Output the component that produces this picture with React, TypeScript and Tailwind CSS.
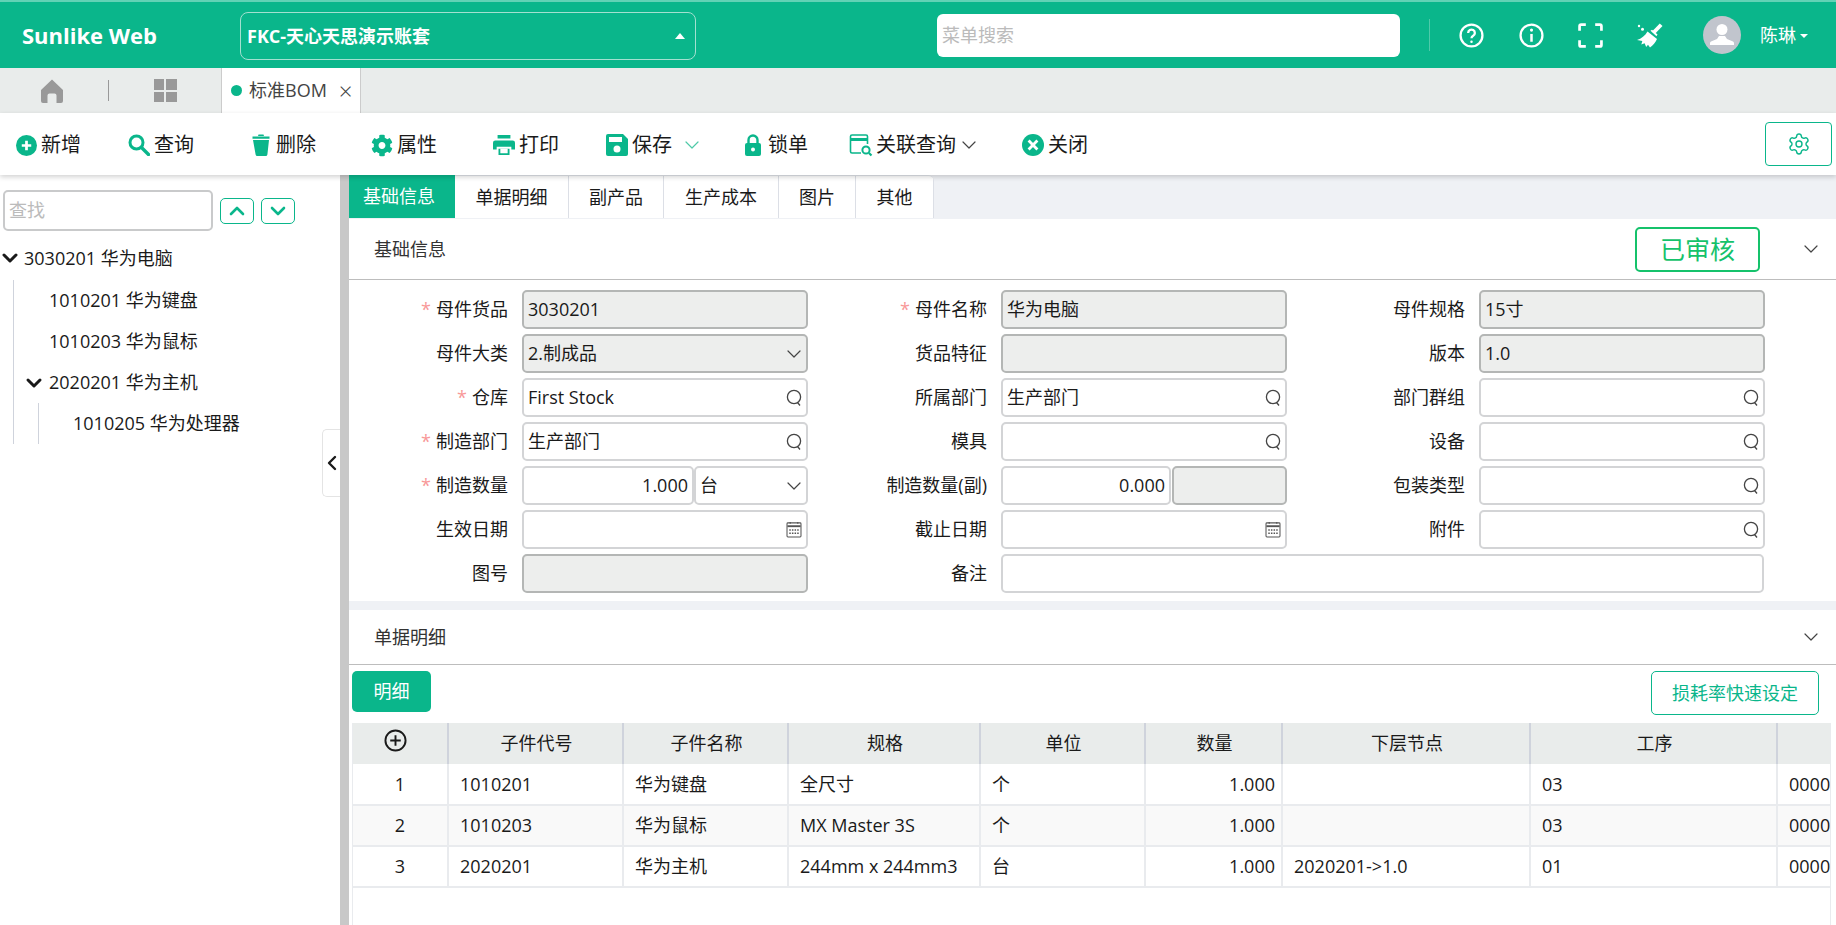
import type { ReactNode } from "react";
import { FaCog } from "react-icons/fa";
import { ChevronDown, ChevronUp, ChevronLeft, Settings } from "lucide-react";

const green = "#0ab68b";

const tabs = ["单据明细", "副产品", "生产成本", "图片", "其他"];
const tabWidths = ["w-[114px]", "w-[95px]", "w-[115px]", "w-[77px]", "w-[78px]"];

function PlusIcon() {
  return (
    <svg viewBox="0 0 20 20" className="h-[21px] w-[21px]">
      <circle cx="10" cy="10" r="10" fill={green} />
      <path d="M10 5.5v9M5.5 10h9" stroke="#fff" strokeWidth="2.6" />
    </svg>
  );
}

function SearchIcon() {
  return (
    <svg viewBox="0 0 22 22" className="h-[22px] w-[22px]" fill="none" stroke={green}>
      <circle cx="8.5" cy="8.5" r="6.5" strokeWidth="3" />
      <path d="M13.5 13.5l7 7" strokeWidth="3.4" strokeLinecap="round" />
    </svg>
  );
}

function TrashIcon() {
  return (
    <svg viewBox="0 0 18 22" className="h-[22px] w-[18px]" fill={green}>
      <path d="M6.5 0.5h5l0.5 1.5h-6zM0.5 2.5h17v2.2h-17zM1 6h16l-1.6 14.5q-0.2 1.5-1.7 1.5h-8.4q-1.5 0-1.7-1.5z" />
    </svg>
  );
}

function PrintIcon() {
  return (
    <svg viewBox="0 0 24 22" className="h-[22px] w-[24px]" fill={green}>
      <path d="M5 0h14v4H5zM2.5 6h19Q24 6 24 8.5V16h-4v-3H4v3H0V8.5Q0 6 2.5 6zM6 15h12v7H6z" />
      <rect x="8" y="15" width="8" height="5" fill="#fff" />
    </svg>
  );
}

function SaveIcon() {
  return (
    <svg viewBox="0 0 22 22" className="h-[22px] w-[22px]">
      <path d="M2 0h15l5 5v15q0 2-2 2H2q-2 0-2-2V2q0-2 2-2z" fill={green} />
      <rect x="3" y="3" width="13" height="5" fill="#fff" />
      <circle cx="11" cy="15" r="3.5" fill="#fff" />
    </svg>
  );
}

function LockIcon() {
  return (
    <svg viewBox="0 0 16 22" className="h-[22px] w-[16px]">
      <path d="M3.5 10V6a4.5 4.5 0 0 1 9 0v4" fill="none" stroke={green} strokeWidth="2.4" />
      <rect x="0" y="9" width="16" height="13" rx="2" fill={green} />
      <circle cx="8" cy="15.5" r="2" fill="#fff" />
    </svg>
  );
}

function LinkQueryIcon() {
  return (
    <svg viewBox="0 0 24 24" className="h-[24px] w-[24px] shrink-0" fill="none" stroke={green}>
      <path d="M12 20H3q-1.5 0-1.5-1.5v-15Q1.5 2 3 2h14q1.500 0 1.500 1.500V11" strokeWidth="1.6" />
      <path d="M2 6.500h16" strokeWidth="3" />
      <circle cx="17" cy="17" r="3.6" strokeWidth="2" />
      <path d="M20 20l2.500 2.500" strokeWidth="2.2" />
    </svg>
  );
}

function CloseIcon() {
  return (
    <svg viewBox="0 0 20 20" className="h-[22px] w-[22px]">
      <circle cx="10" cy="10" r="10" fill={green} />
      <path d="M6 6l8 8M14 6l-8 8" stroke="#fff" strokeWidth="2.6" />
    </svg>
  );
}

function LensIcon() {
  return (
    <svg viewBox="0 0 16 18" className="h-[18px] w-[16px]" fill="none" stroke="#444" strokeWidth="1.3">
      <circle cx="8" cy="8" r="6.6" />
      <path d="M11.500 13.500l2.500 3" />
    </svg>
  );
}

function CalendarIcon() {
  return (
    <svg viewBox="0 0 16 18" className="h-[17px] w-[16px]" fill="none" stroke="#555">
      <rect x="0.6" y="2" width="14.8" height="15" rx="1" strokeWidth="1.1" />
      <path d="M1 5.500h14" strokeWidth="2" />
      <path d="M4 1v2M12 1v2" strokeWidth="1.2" />
      <path d="M3 9.500h10M3 13h10" strokeWidth="1.4" strokeDasharray="1.6 1.2" />
    </svg>
  );
}

function ToolItem({
  icon,
  label,
  width,
  chevron,
  chevronGap,
}: {
  icon: ReactNode;
  label: string;
  width: string;
  chevron?: string;
  chevronGap?: string;
}) {
  return (
    <div className={`flex shrink-0 items-center ${width}`}>
      <div className="flex h-6 w-[22px] items-center justify-center">{icon}</div>
      <span className="ml-[4px] text-[20px] text-[#1a1a1a]">{label}</span>
      {chevron && <ChevronDown className={`h-[24px] w-[24px] ${chevronGap}`} strokeWidth={1.2} color={chevron} />}
    </div>
  );
}

type FieldProps = {
  label: string;
  required?: boolean;
  value?: string;
  kind?: "text" | "disabled" | "lookup" | "select" | "date";
};

function Box({ value, kind = "text", right, className = "" }: { value?: string; kind?: FieldProps["kind"]; right?: boolean; className?: string }) {
  const disabled = kind === "disabled" || kind === "select";
  return (
    <div
      className={`flex h-[39px] items-center rounded-[5px] border-2 px-[4px] text-[18px] text-[#1a1a1a] ${
        disabled ? "border-[#b4b6b5] bg-[#edeeed]" : "border-[#d3d4d6] bg-white"
      } ${right ? "justify-end" : "justify-between"} ${className}`}
    >
      {value !== undefined && <span className="truncate">{value}</span>}
      {kind === "lookup" && <span className="ml-auto flex"><LensIcon /></span>}
      {kind === "date" && <span className="ml-auto flex"><CalendarIcon /></span>}
      {kind === "select" && <ChevronDown className="-mr-[4px] ml-auto h-[24px] w-[24px]" strokeWidth={1.2} color="#444" />}
    </div>
  );
}

function FieldLabel({ label, required }: { label: string; required?: boolean }) {
  return (
    <div className="w-[159px] shrink-0 text-right text-[18px] text-[#1a1a1a]">
      {required && <span className="mr-[5px] text-[#f89898]">*</span>}
      {label}
    </div>
  );
}

function Field({ label, required, value, kind }: FieldProps) {
  return (
    <div className="flex items-center gap-[14px]">
      <FieldLabel label={label} required={required} />
      <Box value={value} kind={kind} className="w-[286px]" />
    </div>
  );
}

function SectionHeader({ title, height, children }: { title: string; height: string; children?: ReactNode }) {
  return (
    <div className={`flex items-center border-b border-[#bdbdbd] bg-white pl-[25px] pr-[13px] ${height}`}>
      <span className="text-[18px] text-[#333]">{title}</span>
      {children}
      <ChevronDown className={`h-[24px] w-[24px] ${children ? "ml-[39px]" : "ml-auto"}`} strokeWidth={1.2} color="#444" />
    </div>
  );
}

const tableRows = [
  { no: "1", code: "1010201", name: "华为键盘", spec: "全尺寸", unit: "个", qty: "1.000", node: "", proc: "03" },
  { no: "2", code: "1010203", name: "华为鼠标", spec: "MX Master 3S", unit: "个", qty: "1.000", node: "", proc: "03" },
  { no: "3", code: "2020201", name: "华为主机", spec: "244mm x 244mm3", unit: "台", qty: "1.000", node: "2020201->1.0", proc: "01" },
];

const th = "h-[41px] border-r-2 border-[#cfd3dc] pl-[2px] text-center font-normal";
const td = "h-[41px] border-r-2 border-b-2 border-[#e9ebee] px-[11px]";

export default function App() {
  return (
    <div
      className="flex h-[925px] w-[1836px] flex-col overflow-hidden bg-white text-[18px]"
      style={{ fontFamily: '"Open Sans", "Noto Sans CJK SC", sans-serif' }}
    >
      {/* top bar */}
      <header className="flex h-[68px] shrink-0 items-center border-t-2 border-[#62d2b5] bg-[#0ab68b] text-white">
        <div className="w-[240px] shrink-0 pl-[22px] text-[22px] font-bold">Sunlike Web</div>
        <div className="mt-[2px] flex h-[48px] w-[456px] shrink-0 items-center justify-between rounded-[8px] border border-[#a3e0d0] pl-[6px] pr-[10px] text-[18px] font-bold">
          <span>FKC-天心天思演示账套</span>
          <span className="h-0 w-0 border-x-[5px] border-b-[6px] border-x-transparent border-b-white" />
        </div>
        <div className="ml-[241px] flex h-[43px] w-[463px] shrink-0 items-center rounded-[6px] bg-white pl-[5px] text-[#bbb]">菜单搜索</div>
        <div className="ml-[29px] h-[32px] w-px bg-[#4fcaaa]" />
        <svg viewBox="0 0 24 24" className="ml-[29px] h-[25px] w-[25px]" fill="none" stroke="#fff" strokeWidth="2.200">
          <circle cx="12" cy="12" r="10.500" />
          <path d="M8.800 9.500a3.200 3.200 0 1 1 4.800 2.800c-1 .6-1.600 1.200-1.600 2.400" />
          <circle cx="12" cy="18" r="1.200" fill="#fff" stroke="none" />
        </svg>
        <svg viewBox="0 0 24 24" className="ml-[35px] h-[25px] w-[25px]" fill="none" stroke="#fff" strokeWidth="2.200">
          <circle cx="12" cy="12" r="10.500" />
          <path d="M12 10.500v7.500" strokeWidth="2.400" />
          <circle cx="12" cy="6.800" r="1.500" fill="#fff" stroke="none" />
        </svg>
        <svg viewBox="0 0 24 24" className="ml-[34px] h-[25px] w-[25px]" fill="none" stroke="#fff" strokeWidth="2.600">
          <path d="M1.500 7.500V3q0-1.500 1.500-1.500h4.500M16.500 1.500H21q1.500 0 1.500 1.500v4.500M22.500 16.500V21q0 1.500-1.500 1.500h-4.500M7.500 22.500H3q-1.500 0-1.500-1.500v-4.500" />
        </svg>
        <svg viewBox="0 0 26 26" className="ml-[34px] h-[26px] w-[26px]" fill="#fff">
          <path d="M22.800 1.500l2.700 2.500-7.700 8-2.800-2.500z" />
          <path d="M10.500 9.500l9.500 7.500c-1.500 3.500-4 6.500-7 8.500l-2-2.800-1.800 2.200-1.600-3.600-3.300 1.200 1-3.600-5.300-.9c4.500-1.500 8-4.300 10.500-8.500z" />
          <path d="M13.500 8.700l1.500-1 5.500 4.800-1 1.800z" />
          <circle cx="2" cy="4" r="1.200" />
          <circle cx="5.500" cy="7.200" r="1.500" />
        </svg>
        <div className="ml-[40px] flex h-[38px] w-[38px] shrink-0 items-center justify-center overflow-hidden rounded-full bg-[#c1c5cd]">
          <svg viewBox="0 0 38 38" className="h-[38px] w-[38px]" fill="#fff">
            <circle cx="19" cy="13.500" r="5.500" />
            <path d="M16 20h6l2 3 6 2.500q1 .5 1 1.500v2H7v-2q0-1 1-1.500l6-2.500z" />
          </svg>
        </div>
        <span className="ml-[19px] text-[18px]">陈琳</span>
        <span className="ml-[4px] mt-[2px] h-0 w-0 border-x-[4px] border-t-[4px] border-x-transparent border-t-white" />
      </header>

      {/* tab bar */}
      <div className="flex h-[45px] shrink-0 items-stretch bg-[#e9eceb]">
        <div className="flex w-[108px] shrink-0 items-center justify-center pr-[4px]">
          <svg viewBox="0 0 22 24" className="h-[24px] w-[22px]" fill="#999">
            <path d="M11 0.500L22 11v11q0 2-2 2h-4.500v-7.500q0-2-2-2h-5q-2 0-2 2V24H2q-2 0-2-2V11z" />
          </svg>
        </div>
        <div className="my-[12px] w-px bg-[#999]" />
        <div className="flex w-[112px] shrink-0 items-center justify-center">
          <div className="grid grid-cols-2 gap-[2px]">
            <span className="h-[10.500px] w-[10.500px] bg-[#999]" />
            <span className="h-[10.500px] w-[10.500px] bg-[#999]" />
            <span className="h-[10.500px] w-[10.500px] bg-[#999]" />
            <span className="h-[10.500px] w-[10.500px] bg-[#999]" />
          </div>
        </div>
        <div className="flex w-[140px] shrink-0 items-center border-x border-[#ccc] bg-white pl-[9px] text-[18px] text-[#444]">
          <span className="mr-[7px] h-[11px] w-[11px] rounded-full bg-[#0ab68b]" />
          标准BOM
          <span className="ml-[12px] text-[24px] font-light leading-none">×</span>
        </div>
      </div>

      {/* toolbar */}
      <div className="relative z-10 flex h-[62px] shrink-0 items-center pl-[15px] pr-[4px] pt-[2px] shadow-[0_2px_5px_rgba(0,0,0,0.18)]">
        <ToolItem icon={<PlusIcon />} label="新增" width="w-[113px]" />
        <ToolItem icon={<SearchIcon />} label="查询" width="w-[122px]" />
        <ToolItem icon={<TrashIcon />} label="删除" width="w-[121px]" />
        <ToolItem icon={<FaCog size={23} color={green} />} label="属性" width="w-[122px]" />
        <ToolItem icon={<PrintIcon />} label="打印" width="w-[113px]" />
        <ToolItem icon={<SaveIcon />} label="保存" width="w-[136px]" chevron="#4fc9a8" chevronGap="ml-[8px]" />
        <ToolItem icon={<LockIcon />} label="锁单" width="w-[108px]" />
        <ToolItem icon={<LinkQueryIcon />} label="关联查询" width="w-[172px]" chevron="#444" chevronGap="ml-[1px]" />
        <ToolItem icon={<CloseIcon />} label="关闭" width="w-[100px]" />
        <button className="-mt-[2px] ml-auto flex h-[44px] w-[67px] items-center justify-center rounded-[4px] border border-[#0ab68b]">
          <Settings className="h-[24px] w-[24px]" strokeWidth={1.4} color={green} />
        </button>
      </div>

      <div className="flex min-h-0 flex-1">
        {/* tree */}
        <aside className="relative w-[340px] shrink-0 pt-[15px] text-[18px] text-[#1a1a1a]">
          <div className="flex items-center pl-[3px]">
            <div className="flex h-[41px] w-[210px] items-center rounded-[5px] border-2 border-[#c9cacb] pl-[4px] text-[#bbb]">查找</div>
            <button className="ml-[7px] flex h-[26px] w-[34px] items-center justify-center rounded-[5px] border border-[#0ab68b]">
              <ChevronUp className="h-[24px] w-[24px]" strokeWidth={2.6} color={green} />
            </button>
            <button className="ml-[7px] flex h-[26px] w-[34px] items-center justify-center rounded-[5px] border border-[#0ab68b]">
              <ChevronDown className="h-[24px] w-[24px]" strokeWidth={2.6} color={green} />
            </button>
          </div>
          <div className="mt-[6px]">
            <div className="flex h-[42px] items-center">
              <ChevronDown className="-ml-[2px] h-[24px] w-[24px]" strokeWidth={3} color="#1a1a1a" />
              <span className="ml-[2px]">3030201 华为电脑</span>
            </div>
            <div className="ml-[13px] mt-[1px] border-l border-[#cfd3dc]">
              <div className="flex h-[41px] items-center pl-[35px]">1010201 华为键盘</div>
              <div className="flex h-[41px] items-center pl-[35px]">1010203 华为鼠标</div>
              <div className="flex h-[41px] items-center pl-[8px]">
                <ChevronDown className="h-[24px] w-[24px]" strokeWidth={3} color="#1a1a1a" />
                <span className="ml-[3px]">2020201 华为主机</span>
              </div>
              <div className="ml-[24px] border-l border-[#cfd3dc]">
                <div className="flex h-[41px] items-center pl-[34px]">1010205 华为处理器</div>
              </div>
            </div>
          </div>
          <div className="absolute right-0 top-[254px] flex h-[68px] w-[18px] items-center justify-center rounded-l-[5px] border border-r-0 border-[#e4e4e4] bg-white">
            <ChevronLeft className="h-[24px] w-[24px] shrink-0" strokeWidth={2.4} color="#1a1a1a" />
          </div>
        </aside>
        <div className="w-[9px] shrink-0 bg-[#c8c8c8]" />

        {/* detail */}
        <main className="flex min-w-0 flex-1 flex-col bg-white text-[18px] text-[#1a1a1a]">
          <div className="flex h-[44px] shrink-0 bg-[#eff1f5]">
            <div className="flex h-[43px] w-[106px] items-center justify-center bg-[#0ab68b] pr-[6px] text-white">基础信息</div>
            <div className="flex h-[43px] overflow-hidden rounded-tr-[6px] border-t border-[#e4e7ed]">
              {tabs.map((t, i) => (
                <div key={t} className={`flex items-center justify-center border-r border-[#dcdfe6] bg-white ${tabWidths[i]}`}>
                  {t}
                </div>
              ))}
            </div>
          </div>

          <SectionHeader title="基础信息" height="h-[61px]">
            <div className="ml-auto mt-[1px] flex h-[45px] w-[125px] items-center justify-center rounded-[5px] border-2 border-[#15c26b] text-[25px] text-[#15c26b]">已审核</div>
          </SectionHeader>

          <div className="grid grid-cols-[479px_478px_479px] gap-y-[5px] pb-[8px] pt-[10px]">
            <Field label="母件货品" required value="3030201" kind="disabled" />
            <Field label="母件名称" required value="华为电脑" kind="disabled" />
            <Field label="母件规格" value="15寸" kind="disabled" />
            <Field label="母件大类" value="2.制成品" kind="select" />
            <Field label="货品特征" kind="disabled" />
            <Field label="版本" value="1.0" kind="disabled" />
            <Field label="仓库" required value="First Stock" kind="lookup" />
            <Field label="所属部门" value="生产部门" kind="lookup" />
            <Field label="部门群组" kind="lookup" />
            <Field label="制造部门" required value="生产部门" kind="lookup" />
            <Field label="模具" kind="lookup" />
            <Field label="设备" kind="lookup" />
            <div className="flex items-center gap-[14px]">
              <FieldLabel label="制造数量" required />
              <Box value="1.000" right className="w-[172px]" />
              <div className="-ml-[14px] flex h-[39px] w-[114px] items-center justify-between rounded-[5px] border-2 border-[#d3d4d6] pl-[4px]">
                台
                <ChevronDown className="h-[24px] w-[24px]" strokeWidth={1.2} color="#444" />
              </div>
            </div>
            <div className="flex items-center gap-[14px]">
              <FieldLabel label="制造数量(副)" />
              <Box value="0.000" right className="w-[170px]" />
              <Box kind="disabled" className="-ml-[13px] w-[115px]" />
            </div>
            <Field label="包装类型" kind="lookup" />
            <Field label="生效日期" kind="date" />
            <Field label="截止日期" kind="date" />
            <Field label="附件" kind="lookup" />
            <Field label="图号" kind="disabled" />
            <div className="col-span-2 flex items-center gap-[14px] pr-[21px]">
              <FieldLabel label="备注" />
              <Box className="flex-1" />
            </div>
          </div>

          <div className="h-[9px] shrink-0 bg-[#eff1f5]" />
          <SectionHeader title="单据明细" height="h-[55px]" />

          <div className="flex h-[58px] shrink-0 items-start justify-between pl-[3px] pr-[17px] pt-[6px]">
            <div className="flex h-[41px] w-[79px] items-center justify-center rounded-[5px] bg-[#0ab68b] text-white">明细</div>
            <div className="flex h-[44px] w-[168px] items-center justify-center rounded-[5px] border border-[#0ab68b] text-[#0ab68b]">损耗率快速设定</div>
          </div>

          <div className="ml-[3px] mr-[5px] min-h-0 flex-1 overflow-hidden border-x border-[#e9ebee]">
            <table className="w-full table-fixed border-collapse whitespace-nowrap">
              <colgroup>
                <col className="w-[95px]" />
                <col className="w-[175px]" />
                <col className="w-[165px]" />
                <col className="w-[192px]" />
                <col className="w-[165px]" />
                <col className="w-[137px]" />
                <col className="w-[248px]" />
                <col className="w-[247px]" />
                <col />
              </colgroup>
              <thead>
                <tr className="bg-[#e9eceb]">
                  <th className={th}>
                    <svg viewBox="0 0 24 24" className="relative -left-[6px] -top-[3px] mx-auto h-[23px] w-[23px]" fill="none" stroke="#1a1a1a" strokeWidth="2">
                      <circle cx="12" cy="12" r="10.500" />
                      <path d="M12 6.500v11M6.500 12h11" />
                    </svg>
                  </th>
                  <th className={th}>子件代号</th>
                  <th className={th}>子件名称</th>
                  <th className={th}>规格</th>
                  <th className={th}>单位</th>
                  <th className={th}>数量</th>
                  <th className={th}>下层节点</th>
                  <th className={th}>工序</th>
                  <th className="h-[41px]" />
                </tr>
              </thead>
              <tbody>
                {tableRows.map((r, i) => (
                  <tr key={r.no} className={i === 1 ? "bg-[#f9f9f9]" : "bg-white"}>
                    <td className={`${td} text-center`}>{r.no}</td>
                    <td className={td}>{r.code}</td>
                    <td className={td}>{r.name}</td>
                    <td className={td}>{r.spec}</td>
                    <td className={td}>{r.unit}</td>
                    <td className={`${td} pr-[6px] text-right`}>{r.qty}</td>
                    <td className={td}>{r.node}</td>
                    <td className={td}>{r.proc}</td>
                    <td className="h-[41px] overflow-hidden border-b-2 border-[#e9ebee] pl-[11px]">0000</td>
                  </tr>
                ))}
              </tbody>
            </table>
          </div>
        </main>
      </div>
    </div>
  );
}
